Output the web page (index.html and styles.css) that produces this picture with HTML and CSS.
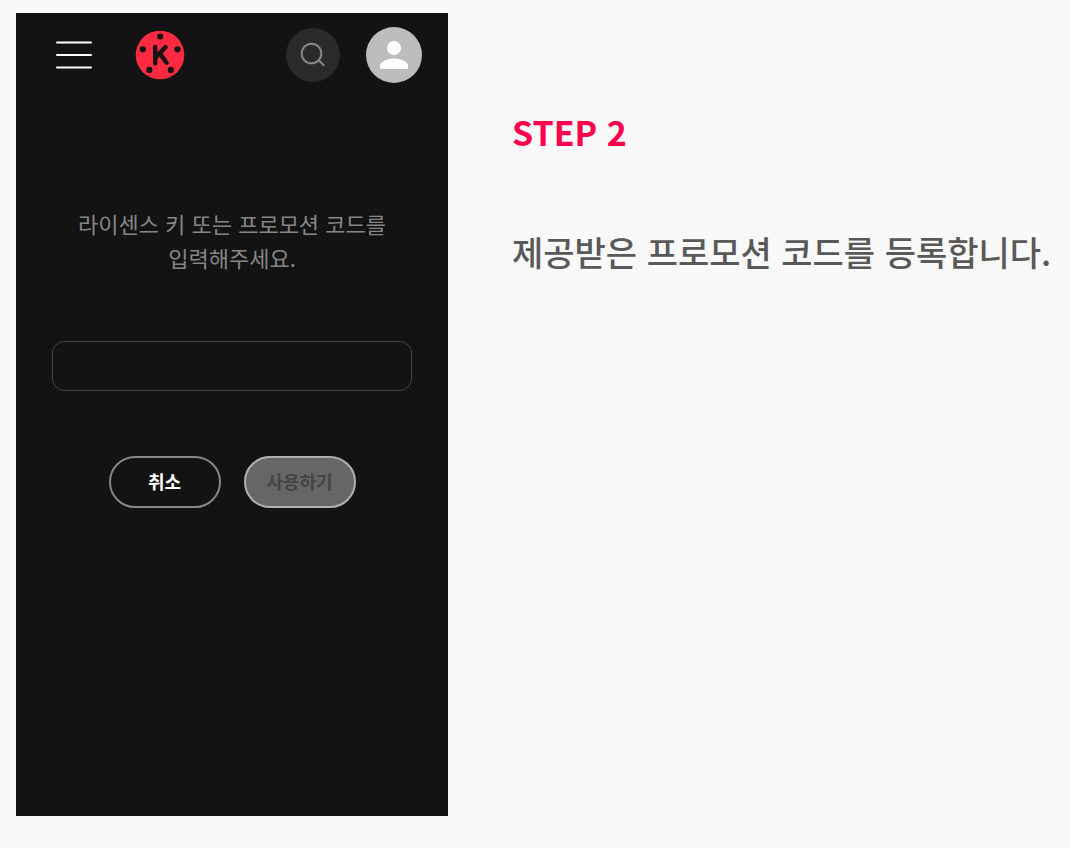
FILE: index.html
```html
<!DOCTYPE html>
<html lang="ko">
<head>
  <meta charset="UTF-8" />
  <meta name="viewport" content="width=device-width, initial-scale=1.0" />
  <title>프로모션 코드 등록</title>
  <link rel="stylesheet" href="styles.css">
</head>
<body>
  <main class="guide">
    <section class="phone">
      <header class="topbar">
        <button class="icon-btn menu" type="button" aria-label="메뉴">
          <svg width="36" height="30" viewBox="0 0 36 30" fill="none" stroke="#fff" stroke-width="2" stroke-linecap="round">
            <path d="M1 2.500h34M1 15h34M1 27.500h34" />
          </svg>
        </button>
        <a class="logo" href="#" aria-label="홈">
          <svg width="50" height="50" viewBox="0 0 50 50">
            <circle cx="25" cy="25" r="24.3" fill="#ff2a40" />
            <g fill="#131313">
              <circle cx="25.200" cy="6.500" r="3.100" />
              <circle cx="7.800" cy="19.300" r="3.100" />
              <circle cx="42.500" cy="19.300" r="3.100" />
              <circle cx="14.400" cy="39.900" r="3.100" />
              <circle cx="35.800" cy="39.900" r="3.100" />
            </g>
            <path d="M20.200 17v16.200M30.600 17L20.600 27.600M25 23.600l6.600 9.200" fill="none" stroke="#131313" stroke-width="4.400" stroke-linecap="round" />
          </svg>
        </a>
        <button class="icon-btn search" type="button" aria-label="검색">
          <svg width="26" height="26" viewBox="0 0 26 26" fill="none" stroke="#868686" stroke-width="2" stroke-linecap="round">
            <circle cx="11.500" cy="11.500" r="9.800" />
            <path d="M18.500 18l5.200 5.200" />
          </svg>
        </button>
        <button class="icon-btn avatar" type="button" aria-label="내 계정">
          <svg width="28" height="28" viewBox="0 0 28 28" fill="#fff">
            <circle cx="14" cy="7" r="7" />
            <path d="M0 28v-3.500c0-4.600 9.300-7 14-7s14 2.400 14 7v3.500z" />
          </svg>
        </button>
      </header>

      <form class="code-form">
        <label class="prompt" for="code">라이센스 키 또는 프로모션 코드를<br>입력해주세요.</label>
        <input class="code-input" id="code" type="text">
        <div class="actions">
          <button class="btn" type="button">취소</button>
          <button class="btn btn-submit" type="submit" disabled>사용하기</button>
        </div>
      </form>
    </section>

    <section class="step">
      <h2>STEP 2</h2>
      <p>제공받은 프로모션 코드를 등록합니다.</p>
    </section>
  </main>
</body>
</html>
```

FILE: styles.css
```css
* {
  box-sizing: border-box;
}
body {
  margin: 0;
  font-family: "Noto Sans CJK KR", sans-serif;
  background: #f9f9f9;
  color: #595959;
}
.guide {
  display: flex;
  gap: 64px;
  min-height: 100vh;
  padding: 13px 16px 32px;
}
.phone {
  flex: 0 1 432px;
  background: #131313;
}
.topbar {
  display: flex;
  align-items: center;
  padding: 14px 26px 0 40px;
}
.icon-btn {
  display: flex;
  align-items: center;
  justify-content: center;
  padding: 0;
  border: 0;
  background: none;
  cursor: pointer;
}
.logo {
  display: flex;
  margin-left: 43px;
}
.search {
  width: 54px;
  height: 54px;
  margin-left: auto;
  border-radius: 50%;
  background: #2a2a2a;
}
.avatar {
  width: 56px;
  height: 56px;
  margin-left: 26px;
  border-radius: 50%;
  background: #bdbdbd;
}
.code-form {
  display: flex;
  flex-direction: column;
  padding: 123px 36px 0;
}
.prompt {
  font-size: 22px;
  line-height: 34px;
  text-align: center;
  color: #868686;
}
.code-input {
  width: 100%;
  height: 50px;
  margin-top: 67px;
  padding: 0 16px;
  border: 1px solid #444;
  border-radius: 12px;
  background: transparent;
  color: #fff;
  font: inherit;
  font-size: 18px;
}
.actions {
  display: flex;
  justify-content: center;
  gap: 23px;
  margin-top: 65px;
}
.btn {
  width: 112px;
  height: 52px;
  padding: 0 0 2px;
  border: 2px solid #868686;
  border-radius: 26px;
  background: transparent;
  color: #fff;
  font-family: inherit;
  font-size: 18px;
  font-weight: 700;
  cursor: pointer;
}
.btn-submit {
  border-color: #b0b0b0;
  background: #666;
  color: #444;
  cursor: default;
}
.step {
  flex: 1;
  padding-top: 92px;
}
.step h2 {
  margin: 0;
  font-size: 34px;
  line-height: 54px;
  font-weight: 700;
  color: #ff004c;
}
.step p {
  margin: 67px 0 0;
  font-size: 34px;
  line-height: 52px;
  font-weight: 500;
}
```
